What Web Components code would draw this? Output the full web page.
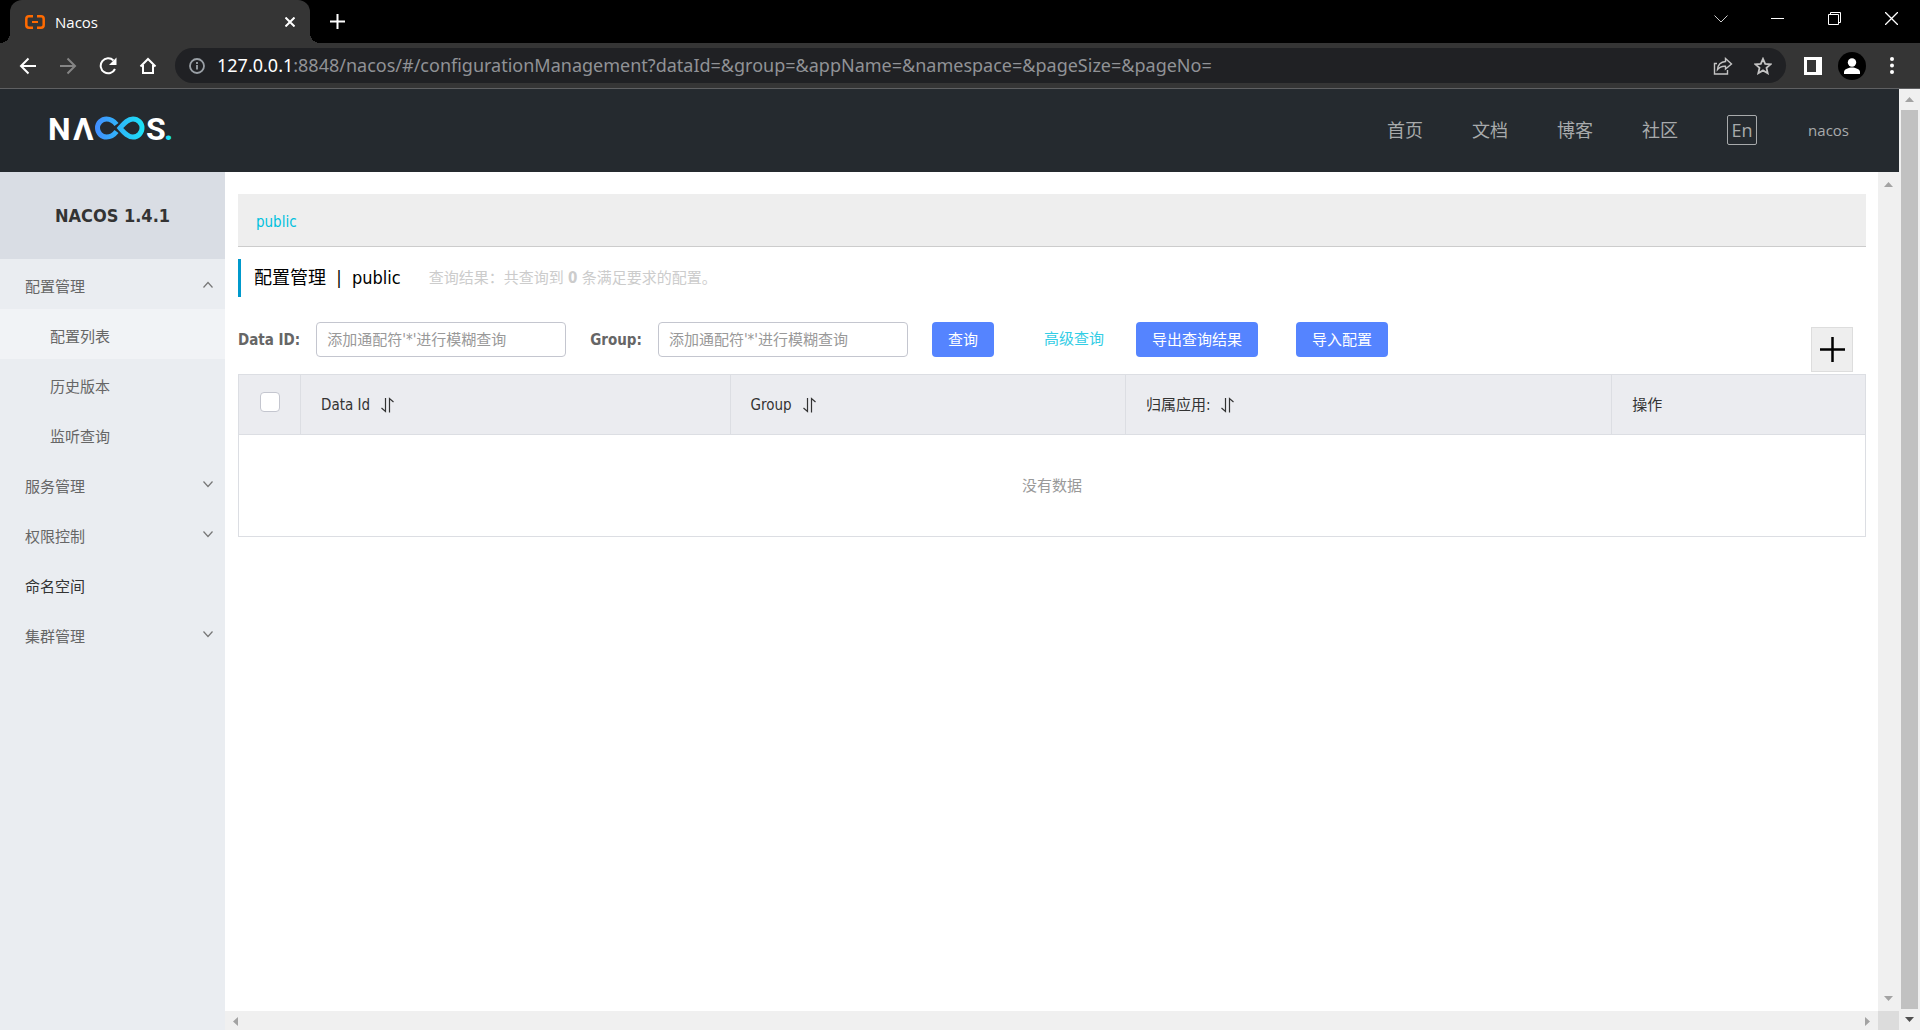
<!DOCTYPE html>
<html lang="zh-CN">
<head>
<meta charset="utf-8">
<title>Nacos</title>
<style>
  body {
    margin: 0;
    font-family: "DejaVu Sans Condensed", "Noto Sans CJK SC", sans-serif;
    font-size: 15px;
    line-height: 20px;
    color: #333;
    --fuente-ventana: "Open Sans", "Noto Sans CJK SC", sans-serif;
  }
</style>
</head>
<body>
<nacos-ventana>
  <nacos-pestanas slot="navegador" titulo="Nacos"></nacos-pestanas>
  <nacos-barra-url slot="navegador" servidor="127.0.0.1" ruta=":8848/nacos/#/configurationManagement?dataId=&amp;group=&amp;appName=&amp;namespace=&amp;pageSize=&amp;pageNo="></nacos-barra-url>
  <nacos-cabecera></nacos-cabecera>
  <nacos-menu slot="lateral" version="NACOS 1.4.1"></nacos-menu>
  <nacos-configuracion slot="contenido" espacio="public"></nacos-configuracion>
</nacos-ventana>

<script>
/**
 * Base de todos los componentes: monta los estilos y la plantilla
 * en la raíz del shadow DOM.
 */
class ComponenteWeb extends HTMLElement {
  constructor() {
    super();
    this.DOMRaiz = this.attachShadow({mode: 'open'});
  }

  connectedCallback() {
    this.DOMRaiz.innerHTML = `<style>
      :host, *, *::before, *::after { box-sizing: border-box; }
      button, input { font: inherit; }
      button { margin: 0; padding: 0; border: 0; background: none; color: inherit; }
      a { color: inherit; text-decoration: none; }
      svg { display: block; flex: none; }
      ${this.__estilos()}
    </style>${this.__plantillaHTML()}`;
  }

  __estilos() { return ''; }
  __plantillaHTML() { return ''; }
}

/* Marco general: navegador, cabecera, menú lateral y contenido */
class Ventana extends ComponenteWeb {
  __estilos() {
    return `
      :host { display: flex; flex-direction: column; height: 100vh; overflow: hidden; }
      .pagina { flex: 1; display: flex; min-height: 0; border-top: 1px solid #5f6062; }
      .documento { flex: 1; display: flex; flex-direction: column; min-width: 0; }
      .cuerpo { flex: 1; display: flex; min-height: 0; }
      .panel { flex: 1; display: flex; flex-direction: column; min-width: 0; }
      .vista { flex: 1; display: flex; min-height: 0; }
      .vista nacos-scroll { padding: 2px 0; }
      .contenido { flex: 1; min-width: 0; background: #fff; }
      .pie { display: flex; height: 19px; }
      .pie nacos-scroll { flex: 1; }
      .esquina { width: 21px; background: #dcdcdc; }
    `;
  }
  __plantillaHTML() {
    return `
      <slot name="navegador"></slot>
      <div class="pagina">
        <div class="documento">
          <slot></slot>
          <div class="cuerpo">
            <slot name="lateral"></slot>
            <div class="panel">
              <div class="vista">
                <main class="contenido"><slot name="contenido"></slot></main>
                <nacos-scroll></nacos-scroll>
              </div>
              <div class="pie"><nacos-scroll horizontal></nacos-scroll><div class="esquina"></div></div>
            </div>
          </div>
        </div>
        <nacos-scroll pulgar></nacos-scroll>
      </div>`;
  }
}

class Scroll extends ComponenteWeb {
  __estilos() {
    return `
      :host { display: flex; flex-direction: column; flex: none; width: 21px; background: #f0f0f0; color: #a3a3a3; }
      :host([horizontal]) { flex-direction: row; width: auto; }
      .flecha { display: flex; align-items: center; justify-content: center; width: 21px; height: 21px; }
      :host([horizontal]) .flecha { height: 20px; }
      :host([horizontal]) svg { transform: rotate(-90deg); }
      :host([pulgar]) .flecha:last-child { color: #505050; }
      .carril { flex: 1; margin: 0 2px; }
      :host([pulgar]) .carril { background: #c1c1c1; }
    `;
  }
  __plantillaHTML() {
    return `
      <div class="flecha"><svg width="9" height="5" viewBox="0 0 9 5"><path d="M0 5 4.500 0 9 5Z" fill="currentColor"/></svg></div>
      <div class="carril"></div>
      <div class="flecha"><svg width="9" height="5" viewBox="0 0 9 5"><path d="M0 0h9L4.500 5Z" fill="currentColor"/></svg></div>`;
  }
}

class Pestanas extends ComponenteWeb {
  __estilos() {
    return `
      :host { display: flex; flex: none; height: 43px; background: #000; color: #fff; font-family: var(--fuente-ventana); }
      .pestana { position: relative; display: flex; align-items: center; gap: 10px; width: 300px; margin-left: 10px; padding: 0 15px; border-radius: 12px 12px 0 0; background: #353535; }
      .pestana::before, .pestana::after { content: ''; position: absolute; bottom: 0; width: 10px; height: 10px; }
      .pestana::before { right: 100%; background: radial-gradient(circle at 0 0, #000 10px, #353535 10px); }
      .pestana::after { left: 100%; background: radial-gradient(circle at 100% 0, #000 10px, #353535 10px); }
      .titulo { flex: 1; }
      .nueva { width: 55px; display: flex; align-items: center; justify-content: center; }
      .controles { display: flex; margin-left: auto; }
      .controles button { display: flex; align-items: center; justify-content: center; width: 57px; height: 37px; }
    `;
  }
  __plantillaHTML() {
    return `
      <div class="pestana">
        <svg width="20" height="14" viewBox="0 0 20 14" fill="none" stroke="#ff6a00" stroke-width="2.500">
          <path d="M8 1.300H4Q1.300 1.300 1.300 4v6q0 2.700 2.700 2.700h4M12 1.300h4q2.700 0 2.700 2.700v6q0 2.700-2.700 2.700h-4"/>
          <path d="M7 7h6" stroke-width="2"/>
        </svg>
        <span class="titulo">${this.getAttribute('titulo')}</span>
        <button aria-label="关闭标签页"><svg width="10" height="10" viewBox="0 0 10 10" stroke="#fff" stroke-width="2"><path d="M.5.5l9 9M9.500.5l-9 9"/></svg></button>
      </div>
      <button class="nueva" aria-label="新标签页"><svg width="15" height="15" viewBox="0 0 15 15" stroke="#fff" stroke-width="2"><path d="M0 7.500h15M7.500 0v15"/></svg></button>
      <div class="controles">
        <button aria-label="搜索标签页"><svg width="14" height="8" viewBox="0 0 14 8" fill="none" stroke="#ccc"><path d="M.5.5 7 7 13.500.5"/></svg></button>
        <button aria-label="最小化"><svg width="13" height="13" viewBox="0 0 13 13" stroke="#fff"><path d="M0 6.500h13"/></svg></button>
        <button aria-label="还原"><svg width="13" height="13" viewBox="0 0 13 13" fill="none" stroke="#fff"><path d="M.5 2.500h10v10H.5ZM2.500 2.500v-2h10v10h-2"/></svg></button>
        <button aria-label="关闭"><svg width="13" height="13" viewBox="0 0 13 13" stroke="#fff" stroke-width="1.300"><path d="M0 0l13 13M13 0 0 13"/></svg></button>
      </div>`;
  }
}

class BarraUrl extends ComponenteWeb {
  __estilos() {
    return `
      :host { display: flex; align-items: center; flex: none; height: 45px; padding: 0 14px; background: #353535; color: #fff; font-family: var(--fuente-ventana); }
      button { display: flex; align-items: center; justify-content: center; width: 40px; height: 35px; flex: none; }
      .atras { width: 28px; margin-right: 6px; }
      .adelante { color: #858585; }
      .direccion { flex: 1; display: flex; align-items: center; min-width: 0; height: 35px; margin: 0 8px 0 7px; padding: 0 3px 0 14px; border-radius: 18px; background: #202124; color: #9aa0a6; }
      .texto { flex: 1; margin-left: 12px; padding-bottom: 2px; font-family: "Noto Sans", sans-serif; font-size: 18px; line-height: 24px; white-space: nowrap; overflow: hidden; color: #909296; }
      .texto b { font-weight: 400; color: #fff; }
      .direccion button { color: #c4c4c4; }
      .lateral { width: 38px; }
      .menu { margin-right: -6px; }
    `;
  }
  __plantillaHTML() {
    return `
      <button class="atras" aria-label="后退"><svg width="18" height="18" viewBox="0 0 18 18" fill="none" stroke="currentColor" stroke-width="2"><path d="M17 9H2M9.500 1.500 2 9l7.500 7.500"/></svg></button>
      <button class="adelante" aria-label="前进"><svg width="18" height="18" viewBox="0 0 18 18" fill="none" stroke="currentColor" stroke-width="2"><path d="M1 9h15M8.500 1.500 16 9l-7.500 7.500"/></svg></button>
      <button aria-label="重新加载"><svg width="18" height="18" viewBox="0 0 18 18" fill="none" stroke="currentColor" stroke-width="2"><path d="M14.500 3.500A7.500 7.500 0 1 0 16 12"/><path d="M17.500.5V8H10Z" fill="currentColor" stroke="none"/></svg></button>
      <button aria-label="主页"><svg width="18" height="18" viewBox="0 0 18 18" fill="none" stroke="currentColor" stroke-width="2"><path d="M1.500 9.500 9 2l7.500 7.500M4 8v8h10V8"/></svg></button>
      <div class="direccion">
        <svg width="16" height="16" viewBox="0 0 16 16" fill="none" stroke="currentColor" stroke-width="1.800"><circle cx="8" cy="8" r="7"/><path d="M8 7v4.500M8 4v2"/></svg>
        <span class="texto"><b>${this.getAttribute('servidor')}</b>${this.getAttribute('ruta').replace(/&/g, '&amp;')}</span>
        <button aria-label="分享"><svg width="20" height="18" viewBox="0 0 20 18" fill="none" stroke="currentColor" stroke-width="1.400"><path d="M4 6.500H1.500v10.500h13v-4"/><path d="M4.500 12.500C5 7.500 8 4.800 12.500 4.500V1.500L18.500 7l-6 5V9.300C9 9 6.500 10 4.500 12.500Z"/></svg></button>
        <button aria-label="收藏"><svg width="18" height="18" viewBox="0 0 18 18" fill="none" stroke="currentColor" stroke-width="1.800"><path d="M9 1.800l2.200 5 5.300.5-4 3.600 1.200 5.300L9 13.400l-4.700 2.800 1.200-5.300-4-3.600 5.300-.5Z"/></svg></button>
      </div>
      <button class="lateral" aria-label="侧边栏"><svg width="18" height="18" viewBox="0 0 18 18"><path fill="#fff" fill-rule="evenodd" d="M0 0h18v18H0ZM3 3v12h9V3Z"/></svg></button>
      <button aria-label="用户"><svg width="28" height="28" viewBox="0 0 28 28"><circle cx="14" cy="14" r="14" fill="#000"/><circle cx="14" cy="10.500" r="4.200" fill="#fff"/><path d="M6 22v-2c0-3 5-4.500 8-4.500s8 1.500 8 4.500v2Z" fill="#fff"/></svg></button>
      <button class="menu" aria-label="菜单"><svg width="4" height="17" viewBox="0 0 4 17" fill="#fff"><circle cx="2" cy="2" r="2"/><circle cx="2" cy="8.500" r="2"/><circle cx="2" cy="15" r="2"/></svg></button>`;
  }
}

class Cabecera extends ComponenteWeb {
  __estilos() {
    return `
      :host { display: flex; align-items: center; flex: none; height: 83px; padding: 0 50px 2px 48px; background: #252a2f; color: #a8aaac; font-family: var(--fuente-ventana); }
      .logo text { font: 700 32px Roboto, sans-serif; fill: #fff; }
      .logo .punto { fill: #1be1f6; }
      nav { display: flex; align-items: center; gap: 49px; margin-left: auto; font-size: 18px; }
      .idioma { width: 30px; height: 30px; border: 1px solid #a8aaac; border-radius: 2px; line-height: 28px; }
      .usuario { margin-left: 2px; font-size: 15px; }
    `;
  }
  __plantillaHTML() {
    return `
      <a class="logo" href="#" aria-label="NACOS">
        <svg width="130" height="44" viewBox="0 0 130 44">
          <defs><linearGradient id="tono" gradientUnits="userSpaceOnUse" x1="45" y1="0" x2="96" y2="0"><stop stop-color="#448bff"/><stop offset="1" stop-color="#1ae3f5"/></linearGradient></defs>
          <text x="0" y="32">N</text><text x="25" y="32">Λ</text><text x="98" y="32">S</text><text class="punto" x="116" y="32">.</text>
          <g fill="none" stroke="url(#tono)" stroke-width="5" transform="translate(1 5)">
            <path d="M67.500 11.500C64.500 7.500 62 6 57.500 6a9 9 0 0 0 0 18c4.500 0 7-1.500 10-5.500"/>
            <path d="M71 15c4-4.500 7.500-9 13-9a9 9 0 0 1 0 18c-5.500 0-9-4.500-13-9Z"/>
          </g>
        </svg>
      </a>
      <nav>
        <a href="#">首页</a><a href="#">文档</a><a href="#">博客</a><a href="#">社区</a>
        <button class="idioma">En</button>
        <a class="usuario" href="#">nacos</a>
      </nav>`;
  }
}

const MENU = [
  {texto: '配置管理', abierto: true, hijos: ['配置列表', '历史版本', '监听查询']},
  {texto: '服务管理', hijos: []},
  {texto: '权限控制', hijos: []},
  {texto: '命名空间'},
  {texto: '集群管理', hijos: []}
];

class Menu extends ComponenteWeb {
  __estilos() {
    return `
      :host { display: block; flex: none; width: 225px; background: #eaedf1; color: #666; }
      h1 { margin: 0; background: #d9dde4; color: #333; font-size: 18px; line-height: 87px; text-align: center; }
      ul { margin: 0; padding: 0; list-style: none; }
      button, a { display: flex; align-items: center; justify-content: space-between; width: 100%; height: 50px; padding: 6px 12px 0 25px; }
      ul ul a { padding-left: 50px; }
      .activo { background: #f1f3f6; }
      .suelto { color: #333; }
      svg { margin-bottom: 6px; }
    `;
  }
  __plantillaHTML() {
    return `<h1>${this.getAttribute('version')}</h1><nav><ul>${MENU.map(m => this.__elemento(m)).join('')}</ul></nav>`;
  }
  __elemento({texto, abierto, hijos}) {
    if (!hijos) return `<li><a class="suelto" href="#">${texto}</a></li>`;
    const trazo = abierto ? 'M.5 6.500l4.500-5 4.500 5' : 'M.5.5l4.500 5 4.500-5';
    const lista = abierto
      ? `<ul>${hijos.map((h, i) => `<li><a href="#" class="${i === 0 ? 'activo' : ''}">${h}</a></li>`).join('')}</ul>`
      : '';
    return `<li><button aria-expanded="${!!abierto}">${texto}<svg width="10" height="7" viewBox="0 0 10 7" fill="none" stroke="#777" stroke-width="1.200"><path d="${trazo}"/></svg></button>${lista}</li>`;
  }
}

class Configuracion extends ComponenteWeb {
  __estilos() {
    return `
      :host { display: block; padding: 22px 12px 0 13px; }
      .espacios { height: 53px; padding: 4px 18px 0; border-bottom: 1px solid #ccc; background: #eee; color: #00c1de; line-height: 48px; }
      .titulo { display: flex; align-items: center; height: 38px; margin: 12px 0 25px; padding-left: 13px; border-left: 3px solid #09c; color: #000; }
      h2 { margin: 0; font-size: 18px; font-weight: 400; white-space: pre; }
      .resultado { margin-left: 28px; color: #ccc; }
      form { display: flex; align-items: flex-start; height: 52px; color: #666; }
      label { line-height: 37px; font-weight: 700; }
      input[type=text] { width: 250px; height: 35px; margin: 0 24px 0 16px; padding: 0 10px; border: 1px solid #c4c6cf; border-radius: 4px; background: #fff; color: #333; }
      input::placeholder { color: #999; opacity: 1; }
      .boton { height: 35px; padding: 0 16px; border-radius: 4px; background: #5584ff; color: #fff; white-space: nowrap; }
      .avanzada { margin: 0 32px 0 50px; line-height: 35px; color: #33cde5; white-space: nowrap; }
      .importar { margin-left: 38px; }
      .crear { display: flex; align-items: center; justify-content: center; width: 42px; height: 45px; margin: 5px 13px 0 auto; border: 1px solid #ddd; background: #eee; color: #000; }
    `;
  }
  __plantillaHTML() {
    const espacio = this.getAttribute('espacio');
    return `
      <div class="espacios"><a href="#">${espacio}</a></div>
      <div class="titulo">
        <h2>配置管理  |  ${espacio}</h2>
        <span class="resultado">查询结果：共查询到 <b>0</b> 条满足要求的配置。</span>
      </div>
      <form onsubmit="return false">
        <label for="dataId">Data ID:</label>
        <input type="text" id="dataId" placeholder="添加通配符'*'进行模糊查询">
        <label for="grupo">Group:</label>
        <input type="text" id="grupo" placeholder="添加通配符'*'进行模糊查询">
        <button class="boton">查询</button>
        <a class="avanzada" href="#">高级查询</a>
        <button class="boton" type="button">导出查询结果</button>
        <button class="boton importar" type="button">导入配置</button>
        <button class="crear" type="button" aria-label="新建配置"><svg width="25" height="25" viewBox="0 0 25 25" stroke="currentColor" stroke-width="2.500"><path d="M0 12.500h25M12.500 0v25"/></svg></button>
      </form>
      <nacos-tabla></nacos-tabla>`;
  }
}

class Tabla extends ComponenteWeb {
  __estilos() {
    return `
      :host { display: block; }
      table { width: 100%; table-layout: fixed; border-collapse: collapse; border: 1px solid #dcdee3; }
      th { height: 60px; padding: 0 20px; border: 1px solid #dcdee3; background: #ebecf0; text-align: left; font-weight: 400; }
      th span { display: flex; align-items: center; gap: 10px; }
      th.marca { padding: 0 0 6px; }
      input { appearance: none; display: block; width: 20px; height: 20px; margin: 0 auto; border: 1px solid #c4c6cf; border-radius: 4px; background: #fff; }
      td { height: 102px; text-align: center; color: #999; }
    `;
  }
  __plantillaHTML() {
    const orden = '<svg width="15" height="16" viewBox="0 0 15 16" fill="none" stroke="#333" stroke-width="1.200"><path d="M5.500 1v13.500L1.500 11M9.500 15.500V1.500L13.500 5"/></svg>';
    return `
      <table>
        <colgroup><col style="width:62px"><col style="width:26.4%"><col style="width:24.3%"><col style="width:29.9%"><col></colgroup>
        <thead><tr>
          <th class="marca"><input type="checkbox" aria-label="全选"></th>
          <th><span>Data Id ${orden}</span></th>
          <th><span>Group ${orden}</span></th>
          <th><span>归属应用: ${orden}</span></th>
          <th>操作</th>
        </tr></thead>
        <tbody><tr><td colspan="5">没有数据</td></tr></tbody>
      </table>`;
  }
}

const COMPONENTES = {
  'nacos-ventana': Ventana,
  'nacos-scroll': Scroll,
  'nacos-pestanas': Pestanas,
  'nacos-barra-url': BarraUrl,
  'nacos-cabecera': Cabecera,
  'nacos-menu': Menu,
  'nacos-configuracion': Configuracion,
  'nacos-tabla': Tabla
};
Object.entries(COMPONENTES).forEach(([etiqueta, clase]) => customElements.define(etiqueta, clase));
</script>
</body>
</html>
